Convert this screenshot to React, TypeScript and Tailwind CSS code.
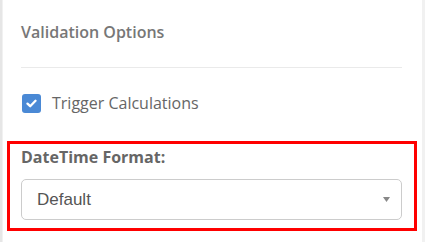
import React from "react";

export default function App() {
  return (
    <div className="w-[425px] h-[242px] bg-[#f1f1f1] flex overflow-hidden" style={{ fontFamily: '"Open Sans", sans-serif' }}>
      <div className="w-[2px] bg-[#e6e6e6]" />
      <div className="w-[419px] ml-[1px] bg-white flex flex-col">
        <div className="pl-[18px] pr-[20px] pt-[21px]">
          <div className="text-[16px] font-semibold text-[#777] leading-[22px]">Validation Options</div>
          <div className="mt-[24px] h-px bg-[#eaeaea]" />
          <label className="mt-[24px] flex items-center gap-[11px]">
            <span className="w-[19px] h-[19px] ml-[1px] rounded-[3px] bg-[#4a89d5] flex items-center justify-center">
              <svg width="11" height="9" viewBox="0 0 11 9">
                <path d="M1.5 4.6 L4.2 7.2 L9.5 1.8" fill="none" stroke="white" strokeWidth="2.3" strokeLinecap="round" strokeLinejoin="round" />
              </svg>
            </span>
            <span className="text-[16px] text-[#666] leading-[22px]">Trigger Calculations</span>
          </label>
        </div>
        <div className="mt-[27px] ml-[4px] w-[410px] h-[90px] border-[3px] border-[#ff0000] pl-[11px] pr-[12px] pt-[2px]">
          <div className="text-[16px] font-bold text-[#666] leading-[22px]">DateTime Format:</div>
          <div className="mt-[11px] h-[41px] border border-[#cccccc] rounded-[5px] flex items-center justify-between pl-[15px] pr-[11px]">
            <span className="text-[17px] text-[#555]" style={{ fontFamily: '"Liberation Sans", Arial, sans-serif' }}>Default</span>
            <svg width="7" height="5" viewBox="0 0 7 5">
              <path d="M0 0 L7 0 L3.5 5 Z" fill="#888" />
            </svg>
          </div>
        </div>
      </div>
    </div>
  );
}
